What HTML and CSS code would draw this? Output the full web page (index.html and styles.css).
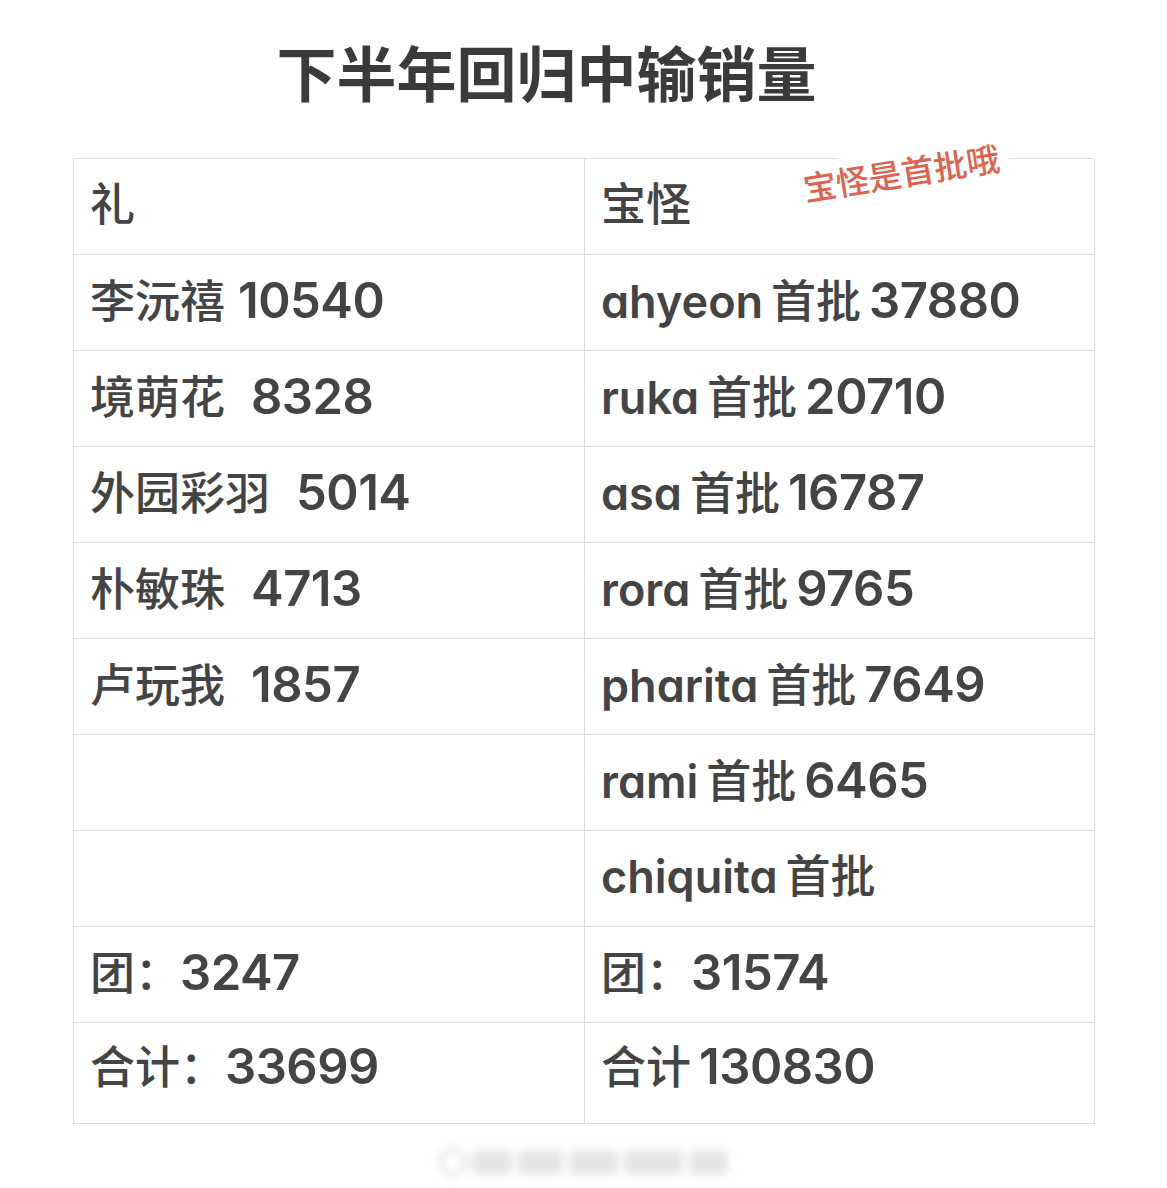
FILE: index.html
```html
<!DOCTYPE html>
<html lang="zh">
<head>
<meta charset="utf-8">
<link rel="stylesheet" href="styles.css">
</head>
<body>
<div class="page">
  <header class="head">
    <h1 class="title">下半年回归中输销量</h1>
  </header>
  <div class="sheet">
    <div class="cell">礼</div>
    <div class="cell cell-note">宝怪<span class="note">宝怪是首批哦</span></div>
    <div class="cell">李沅禧 <span class="n">10540</span></div>
    <div class="cell"><span class="l">ahyeon</span> 首批 <span class="n">37880</span></div>
    <div class="cell">境萌花&nbsp; <span class="n">8328</span></div>
    <div class="cell"><span class="l">ruka</span> 首批 <span class="n">20710</span></div>
    <div class="cell">外园彩羽&nbsp; <span class="n">5014</span></div>
    <div class="cell"><span class="l">asa</span> 首批 <span class="n">16787</span></div>
    <div class="cell">朴敏珠&nbsp; <span class="n">4713</span></div>
    <div class="cell"><span class="l">rora</span> 首批 <span class="n">9765</span></div>
    <div class="cell">卢玩我&nbsp; <span class="n">1857</span></div>
    <div class="cell"><span class="l">pharita</span> 首批 <span class="n">7649</span></div>
    <div class="cell"></div>
    <div class="cell"><span class="l">rami</span> 首批 <span class="n">6465</span></div>
    <div class="cell"></div>
    <div class="cell"><span class="l">chiquita</span> 首批</div>
    <div class="cell">团：<span class="n">3247</span></div>
    <div class="cell">团：<span class="n">31574</span></div>
    <div class="cell cell-last">合计：<span class="n">33699</span></div>
    <div class="cell cell-last">合计 <span class="n">130830</span></div>
  </div>
  <div class="mark">
    <span class="mark-o"></span><span class="mark-a"></span><span class="mark-b"></span><span class="mark-c"></span><span class="mark-d"></span><span class="mark-e"></span>
  </div>
</div>
</body>
</html>
```
FILE: styles.css
```css
html, body {
  margin: 0;
  padding: 0;
  background: #ffffff;
}
.page {
  width: 1167px;
  min-height: 1188px;
  font-family: Inter, "Noto Sans CJK SC", sans-serif;
  color: #444444;
}
.head {
  height: 158px;
  box-sizing: border-box;
  display: flex;
  align-items: center;
  justify-content: center;
  padding-bottom: 16px;
  padding-right: 74px;
}
.title {
  margin: 0;
  font-family: "Noto Sans CJK SC", sans-serif;
  font-size: 60px;
  font-weight: 700;
  line-height: 1;
  color: #3b3b3b;
}
.sheet {
  width: 1021px;
  margin: 0 auto;
  display: grid;
  grid-template-columns: 511px 510px;
  border-top: 1px solid #dddddd;
  border-left: 1px solid #dddddd;
  box-sizing: border-box;
}
.cell {
  height: 96px;
  box-sizing: border-box;
  border-right: 1px solid #dddddd;
  border-bottom: 1px solid #dddddd;
  padding-left: 16px;
  font-size: 45px;
  font-weight: 500;
  line-height: 91px;
  white-space: pre;
  word-spacing: -4px;
}
.cell:nth-child(odd) {
  word-spacing: 1px;
}
.cell-last {
  height: 101px;
  line-height: 88px;
}
.l {
  font-weight: 600;
  font-feature-settings: "cv11" 1;
}
.n {
  font-size: 49px;
  font-weight: 600;
  letter-spacing: -0.5px;
}
.cell-note {
  position: relative;
}
.note {
  position: absolute;
  left: 207px;
  top: -10px;
  padding: 0 10px;
  line-height: 46px;
  background: #ffffff;
  font-family: "Noto Sans CJK SC", sans-serif;
  font-size: 33px;
  font-weight: 500;
  color: #e0624e;
  transform: rotate(-9deg);
  word-spacing: 0;
}
.mark {
  width: 290px;
  height: 36px;
  margin: 20px auto 0;
  display: flex;
  gap: 6px;
  align-items: center;
  filter: blur(4px);
  opacity: 0.45;
}
.mark span {
  display: block;
  height: 24px;
  background: #c4c4c4;
  border-radius: 3px;
}
.mark .mark-o {
  width: 22px;
  height: 22px;
  border-radius: 50%;
  background: transparent;
  border: 3px solid #aaaaaa;
}
.mark-a { width: 40px; }
.mark-b { width: 46px; background: #dedede; }
.mark-c { width: 50px; }
.mark-d { width: 60px; background: #b8b8b8; }
.mark-e { width: 40px; background: #d0d0d0; }
```
